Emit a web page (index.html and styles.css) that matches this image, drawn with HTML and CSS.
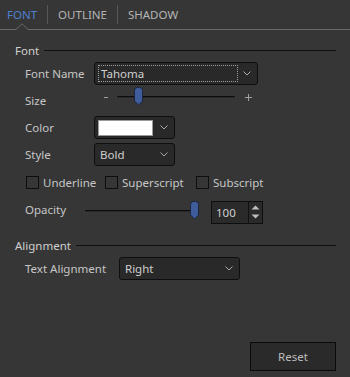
FILE: index.html
```html
<!DOCTYPE html>
<html lang="en">

<head>
    <meta charset="UTF-8">
    <title>Text Properties</title>
    <link rel="stylesheet" href="styles.css">
</head>

<body>
    <div class="tabs">
        <span class="tab tab-active">FONT</span>
        <span class="tab-sep"></span>
        <span class="tab">OUTLINE</span>
        <span class="tab-sep"></span>
        <span class="tab">SHADOW</span>
        <svg class="tab-notch" width="12" height="8" viewBox="0 0 12 8">
            <path d="M0 6.5 L6 0.8 L12 6.5 L12 8 L0 8 Z" fill="#363636" />
            <path d="M0 6.5 L6 0.8 L12 6.5" fill="none" stroke="#686868" stroke-width="1" />
        </svg>
    </div>

    <div class="group-title group-first">Font</div>

    <div class="row">
        <span class="label label-md">Font Name</span>
        <div class="combo combo-wide">
            <span class="combo-focus">Tahoma</span>
            <svg class="chev" width="8" height="5" viewBox="0 0 8 5"><path d="M0.5 0.5 L4 4 L7.5 0.5" fill="none" stroke="#a8a8a8" /></svg>
        </div>
    </div>

    <div class="row">
        <span class="label label-md">Size</span>
        <div class="slider-line slider-size">
            <span class="minus"></span>
            <div class="track track-size">
                <svg class="handle handle-size" width="11" height="19" viewBox="0 0 11 19">
                    <path d="M1.5 3.5 Q1.5 0.5 4.5 0.5 H6.5 Q9.5 0.5 9.5 3.5 V14 L5.5 18 L1.5 14 Z" fill="#405d9b" stroke="#1b2540" />
                </svg>
            </div>
            <span class="plus"></span>
        </div>
    </div>

    <div class="row">
        <span class="label label-md">Color</span>
        <div class="combo combo-small">
            <span class="swatch"></span>
            <svg class="chev" width="8" height="5" viewBox="0 0 8 5"><path d="M0.5 0.5 L4 4 L7.5 0.5" fill="none" stroke="#a8a8a8" /></svg>
        </div>
    </div>

    <div class="row">
        <span class="label label-md">Style</span>
        <div class="combo combo-small">
            <span class="combo-text">Bold</span>
            <svg class="chev" width="8" height="5" viewBox="0 0 8 5"><path d="M0.5 0.5 L4 4 L7.5 0.5" fill="none" stroke="#a8a8a8" /></svg>
        </div>
    </div>

    <div class="row row-checks">
        <label class="check check-1"><span class="box"></span>Underline</label>
        <label class="check check-2"><span class="box"></span>Superscript</label>
        <label class="check"><span class="box"></span>Subscript</label>
    </div>

    <div class="row">
        <span class="label label-sm">Opacity</span>
        <div class="track track-opacity">
            <svg class="handle handle-opacity" width="11" height="19" viewBox="0 0 11 19">
                <path d="M1.5 3.5 Q1.5 0.5 4.5 0.5 H6.5 Q9.5 0.5 9.5 3.5 V14 L5.5 18 L1.5 14 Z" fill="#405d9b" stroke="#1b2540" />
            </svg>
        </div>
        <div class="spin">
            <span class="spin-text">100</span>
            <div class="spin-btns">
                <svg width="9" height="5" viewBox="0 0 9 5"><path d="M0.5 4.5 L4.5 0.5 L8.5 4.5 Z" fill="#bdbdbd" /></svg>
                <svg width="9" height="5" viewBox="0 0 9 5"><path d="M0.5 0.5 L4.5 4.5 L8.5 0.5 Z" fill="#bdbdbd" /></svg>
            </div>
        </div>
    </div>

    <div class="group-title group-next">Alignment</div>

    <div class="row">
        <span class="label label-lg">Text Alignment</span>
        <div class="combo combo-align">
            <span class="combo-text">Right</span>
            <svg class="chev" width="8" height="5" viewBox="0 0 8 5"><path d="M0.5 0.5 L4 4 L7.5 0.5" fill="none" stroke="#a8a8a8" /></svg>
        </div>
    </div>

    <div class="footer">
        <button class="btn">Reset</button>
    </div>
</body>

</html>
```

FILE: styles.css
```css
body,
html {
    margin: 0;
    padding: 0;
}

* {
    box-sizing: border-box;
}

body {
    display: flex;
    flex-direction: column;
    height: 377px;
    overflow: hidden;
    background: #363636;
    color: #c6c6c6;
    font-family: "Noto Sans", "Open Sans", sans-serif;
    font-size: 11.5px;
}

/* tabs */
.tabs {
    position: relative;
    display: flex;
    align-items: center;
    height: 30px;
    padding-left: 7px;
    border-bottom: 1px solid #686868;
}

.tab {
    font-size: 11.5px;
    color: #b4b4b4;
}

.tab-active {
    color: #4f80d0;
}

.tab-sep {
    width: 1px;
    height: 19px;
    margin: 0 10px;
    background: #575757;
}

.tab-notch {
    position: absolute;
    left: 16px;
    top: 23px;
}

/* group headers */
.group-title {
    display: flex;
    align-items: center;
    height: 19px;
    padding: 0 14px 0 15px;
    color: #d0d0d0;
}

.group-title::after {
    flex: 1;
    height: 1px;
    margin-left: 5px;
    background: #101010;
    content: '';
}

.group-first {
    margin-top: 11px;
}

.group-next {
    margin-top: 13px;
}

/* rows */
.row {
    display: flex;
    align-items: center;
    height: 27px;
    padding-left: 25px;
}

.label {
    flex: none;
}

.label-sm {
    width: 60px;
}

.label-md {
    width: 69px;
}

.label-lg {
    width: 94px;
}

/* combo boxes */
.combo {
    display: flex;
    align-items: center;
    height: 23px;
    border: 1px solid #0e0e0e;
    border-radius: 3px;
    background: #292929;
    color: #cfcfcf;
}

.combo-wide {
    width: 164px;
}

.combo-small {
    width: 81px;
}

.combo-align {
    width: 121px;
}

.combo-focus {
    display: flex;
    align-items: center;
    width: 140px;
    height: 17px;
    margin-left: 3px;
    padding-left: 2px;
    border: 1px dotted #9c9c9c;
}

.combo-text {
    padding-left: 5px;
}

.swatch {
    width: 55px;
    height: 16px;
    margin-left: 3px;
    background: #fff;
    border: 1px solid #9a9a9a;
}

.chev {
    margin-left: auto;
    margin-right: 6px;
}

/* sliders */
.slider-line {
    display: flex;
    align-items: center;
}

.slider-size {
    margin-bottom: 7px;
}

.minus {
    width: 4px;
    height: 1px;
    margin-left: 10px;
    background: #a0a0a0;
}

.plus {
    position: relative;
    width: 7px;
    height: 7px;
    margin-left: 10px;
}

.plus::before,
.plus::after {
    position: absolute;
    background: #a0a0a0;
    content: '';
}

.plus::before {
    left: 0;
    top: 3px;
    width: 7px;
    height: 1px;
}

.plus::after {
    left: 3px;
    top: 0;
    width: 1px;
    height: 7px;
}

.track {
    position: relative;
    height: 2px;
    border-top: 1px solid #0c0c0c;
    background: #2b2b2b;
}

.track-size {
    width: 118px;
    margin-left: 9px;
}

.track-opacity {
    width: 112px;
    margin-top: 3px;
}

.handle {
    position: absolute;
    top: -10px;
}

.handle-size {
    left: 16px;
}

.handle-opacity {
    left: 104px;
}

/* checkboxes */
.row-checks {
    padding-left: 26px;
    margin-top: 1px;
}

.check {
    display: flex;
    align-items: center;
}

.check-1 {
    width: 79px;
}

.check-2 {
    width: 91px;
}

.box {
    width: 13px;
    height: 13px;
    margin-right: 4px;
    border: 1px solid #0e0e0e;
}

/* spin box */
.spin {
    display: flex;
    width: 52px;
    height: 23px;
    margin-left: 14px;
    margin-top: 5px;
    border: 1px solid #0e0e0e;
    background: #2a2a2a;
    color: #cfcfcf;
}

.spin-text {
    flex: 1;
    padding-left: 4px;
    line-height: 21px;
}

.spin-btns {
    display: flex;
    flex-direction: column;
    justify-content: space-around;
    align-items: center;
    width: 14px;
    padding: 2px 0;
    border-left: 1px solid #111;
}

/* footer */
.footer {
    display: flex;
    justify-content: flex-end;
    margin-top: auto;
    padding: 0 14px 6px 0;
}

.btn {
    width: 86px;
    height: 29px;
    border: 1px solid #0a0a0a;
    background: #2a2a2a;
    color: #bdbdbd;
    font-family: inherit;
    font-size: 11.5px;
}
```
